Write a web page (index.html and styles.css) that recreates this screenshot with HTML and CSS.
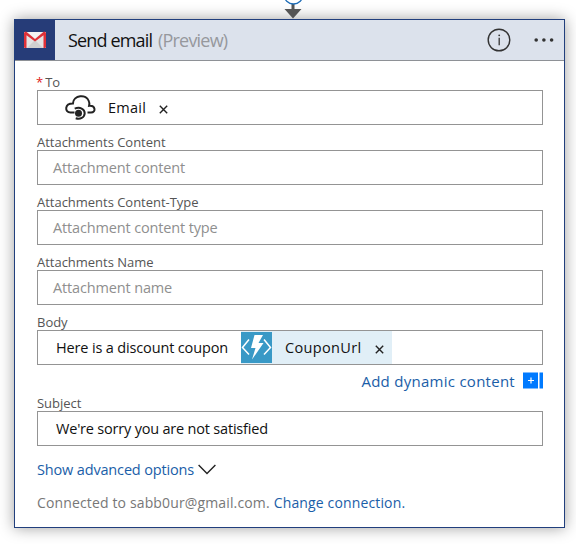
FILE: index.html
```html
<!DOCTYPE html>
<html lang="en">
<head>
<meta charset="utf-8">
<title>Send email</title>
<link rel="stylesheet" href="styles.css">
</head>
<body>
<svg class="connector" width="26" height="19" viewBox="0 0 26 19"><path d="M11.500 4h3v5h7L13 18.500 4.500 9h7z" fill="#555"/><circle cx="13.500" cy="-5.500" r="9.500" fill="#fff" stroke="#1b6ab5" stroke-width="1.300"/></svg>
<main class="card">
  <header class="head">
    <div class="logo"><svg width="22" height="18" viewBox="0 0 22 18"><path d="M0 1h22v16H0z" fill="#e3e3e3"/><path d="M3 17 11 9l8 8z" fill="#d0d0d0"/><path d="M3 1h16l-8 7z" fill="#f3f3f3"/><path d="M0 2.500Q0 .5 2 .5l9 7.500 9-7.500q2 0 2 2V16q0 1-1 1h-1.500V4.200L11 10.600 2.500 4.200V17H1q-1 0-1-1z" fill="#df3038"/></svg></div>
    <h1 class="title"><span class="name">Send email</span> <span class="preview">(Preview)</span></h1>
    <svg class="info" width="24" height="24" viewBox="0 0 24 24"><circle cx="12" cy="12" r="10.800" fill="none" stroke="#333" stroke-width="1.400"/><path d="M12.200 9.800v7.400" stroke="#333" stroke-width="1.300"/><circle cx="12.200" cy="7.300" r=".9" fill="#333"/></svg>
    <svg class="more" width="20" height="6" viewBox="0 0 20 6"><g fill="#333"><circle cx="2.200" cy="3" r="1.800"/><circle cx="9.900" cy="3" r="1.800"/><circle cx="17.600" cy="3" r="1.800"/></g></svg>
  </header>
  <section class="form">
    <div class="field"><label class="label"><span class="req">*</span><span>To</span></label>
      <div class="box"><span class="token plain"><svg class="cloud" width="32" height="28" viewBox="0 0 32 28"><g fill="none" stroke="#222" stroke-width="2"><path d="M10.500 18.600H6.500C.4 18.200.4 9.600 8.900 9.600 9.300 1 22.500-.6 25 7.500q.7 2 .1 4.300c6.500-.7 7.200 6.800 1.900 6.800h-3.500"/><path d="M10.700 14.700c5.200-2.300 10 .3 10 4.600-.2 4.400-4.600 6.300-9 4.900"/></g><circle cx="14.500" cy="19.200" r="3.500" fill="#222"/></svg><span class="email">Email</span><svg class="x" width="9" height="9" viewBox="0 0 9 9"><path d="m.8.800 7.400 7.400M8.200.800.8 8.200" stroke="#222" stroke-width="1.400"/></svg></span></div></div>
    <div class="field"><label class="label">Attachments Content</label><div class="box hint">Attachment content</div></div>
    <div class="field"><label class="label">Attachments Content-Type</label><div class="box hint">Attachment content type</div></div>
    <div class="field"><label class="label">Attachments Name</label><div class="box hint">Attachment name</div></div>
    <div class="field"><label class="label">Body</label>
      <div class="box value"><span class="body-text">Here is a discount coupon</span><span class="token"><svg class="func" width="31" height="31" viewBox="0 0 31 31"><path d="M0 0h31v31H0z" fill="#3999c6"/><path d="m8 7.500-6.500 8 6.500 7M23 7.500l6.500 8-6.500 7" fill="none" stroke="#fff" stroke-width="1.500"/><path d="M13.500 3H22l-4.500 8h5L11 27.500l3.500-11.500H10z" fill="#fff"/></svg><span class="coupon">CouponUrl</span><svg class="x" width="9" height="9" viewBox="0 0 9 9"><path d="m.8.800 7.400 7.400M8.200.800.8 8.200" stroke="#222" stroke-width="1.400"/></svg></span></div></div>
    <div class="dynamic"><a>Add dynamic content</a><svg width="20" height="17" viewBox="0 0 20 17"><path d="M0 .5h15v16H0zM16.500.5H20v16h-3.500z" fill="#007aff"/><path d="M8 5.500v6M5 8.500h6" stroke="#fff" stroke-width="1.200"/></svg></div>
    <div class="field subject"><label class="label">Subject</label><div class="box value">We're sorry you are not satisfied</div></div>
    <div class="advanced"><a>Show advanced options</a><svg width="18" height="11" viewBox="0 0 18 11"><path d="m.6 1 8.400 8.500L17.400 1" fill="none" stroke="#222" stroke-width="1.400"/></svg></div>
    <div class="connection"><span class="account">Connected to sabb0ur@gmail.com.</span><a>Change connection.</a></div>
  </section>
</main>
</body>
</html>
```

FILE: styles.css
```css
* { box-sizing: border-box; }
body { margin: 0; height: 544px; overflow: hidden; background: #fff; font-family: "Open Sans", "Noto Sans", sans-serif; color: #111; white-space: nowrap; }
svg { display: block; flex: none; }
.connector { margin-left: 280px; }
.card { width: 551px; height: 509px; margin-left: 14px; border: 1px solid #213f7d; background: #fff; box-shadow: 0 0 14px rgba(0,0,0,.38); }
.head { display: flex; align-items: center; height: 41px; background: #dce2ec; border-bottom: 1px solid #8e9196; }
.logo { width: 40px; height: 40px; background: #263c78; display: grid; place-items: center; padding-right: 1px; }
.title { margin: 0 0 0 13px; display: flex; gap: 5px; font-size: 18px; line-height: 24px; font-weight: 400; }
.name { width: 85px; letter-spacing: -.84px; }
.preview { color: #96989d; letter-spacing: -.8px; }
.info { margin-left: auto; margin-right: 1px; }
.more { margin: 0 10px 0 22px; }
.form { padding: 13px 21px 0 22px; }
.field { height: 60px; }
.label { display: flex; gap: 2px; height: 16px; line-height: 16px; font-size: 13px; letter-spacing: -.02px; color: #555; }
.req { color: #e02020; margin-left: -1px; }
.box { height: 35px; border: 1px solid #949494; display: flex; align-items: center; font-size: 14.5px; }
.hint { padding-left: 15px; color: #8f8f8f; letter-spacing: -.15px; }
.value { padding-left: 18px; letter-spacing: -.2px; }
.body-text { width: 185px; letter-spacing: -.15px; }
.token { display: flex; align-items: center; height: 33px; background: #e1eff7; width: 151px; }
.plain { background: none; padding-left: 26px; }
.email { width: 51px; margin-left: 12px; letter-spacing: .25px; }
.coupon { width: 90px; margin-left: 13px; letter-spacing: .35px; }
.x { margin-top: 4px; }
a { color: #1a5ea8; }
.dynamic { height: 21px; display: flex; justify-content: flex-end; align-items: center; gap: 8px; margin-top: -4px; margin-bottom: 4px; font-size: 15px; letter-spacing: .27px; }
.subject { height: 51px; }
.advanced { margin-top: 12px; height: 22px; display: flex; align-items: center; gap: 4px; font-size: 14.5px; letter-spacing: -.16px; }
.connection { margin-top: 11px; height: 22px; display: flex; align-items: center; gap: 4px; font-size: 14px; letter-spacing: .14px; color: #777; }
```
